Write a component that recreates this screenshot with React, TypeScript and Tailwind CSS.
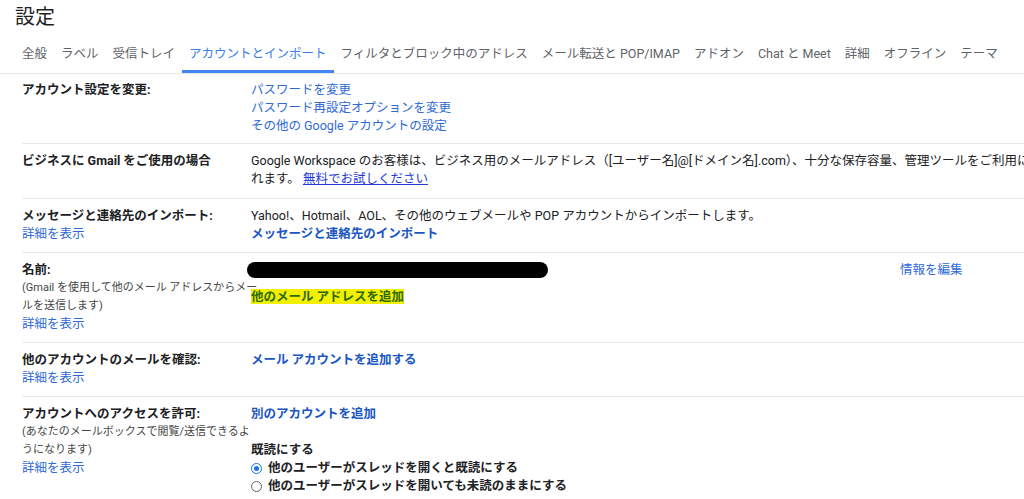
import type { ReactNode } from "react";

const tabs = [
  "全般",
  "ラベル",
  "受信トレイ",
  "アカウントとインポート",
  "フィルタとブロック中のアドレス",
  "メール転送と POP/IMAP",
  "アドオン",
  "Chat と Meet",
  "詳細",
  "オフライン",
  "テーマ",
];

const font = "font-['Roboto','Noto_Sans_CJK_JP',sans-serif]";

function Row({ label, children, pad }: { label: ReactNode; children: ReactNode; pad?: string }) {
  return (
    <div className={`flex border-b border-[#e9e9e9] leading-[18px] ${pad ?? "pt-2 pb-[9px]"}`}>
      <div className="w-[229px] shrink-0">{label}</div>
      {children}
    </div>
  );
}

function Label({ children }: { children: ReactNode }) {
  return <div className="font-bold text-[#202124]">{children}</div>;
}

function Note({ children, wide }: { children: ReactNode; wide?: boolean }) {
  return (
    <div className={wide ? "w-[236px] text-[11px] text-[#444746]" : "text-[11px] text-[#444746]"}>
      {children}
    </div>
  );
}

function More() {
  return <a className="block text-[#2f6ad6]">詳細を表示</a>;
}

function Radio({ checked, children }: { checked?: boolean; children: ReactNode }) {
  return (
    <label className="flex items-center gap-[6px] font-bold text-[#202124]">
      <span
        className={
          checked
            ? "flex h-[11px] w-[11px] items-center justify-center rounded-full border-[1.5px] border-[#1a73e8]"
            : "flex h-[11px] w-[11px] items-center justify-center rounded-full border border-[#5f6368]"
        }
      >
        {checked && <span className="h-[5px] w-[5px] rounded-full bg-[#1a73e8]" />}
      </span>
      {children}
    </label>
  );
}

export default function App() {
  return (
    <div className={`h-[499px] w-[1024px] overflow-hidden bg-white text-[12.5px] text-[#202124] ${font}`}>
      <div className="w-[1200px]">
        <h1 className="pl-[15px] pt-[3px] text-[20px] leading-[28px] font-normal text-[#1f1f1f]">設定</h1>

        <nav className="flex border-b border-[#e6e6e6] pl-[15px] pt-[14px]">
          {tabs.map((t) => (
            <div
              key={t}
              className={
                t === "アカウントとインポート"
                  ? "border-b-[3px] border-[#4285f4] px-[7px] pb-[7px] leading-[18px] whitespace-nowrap text-[#3b7ee8]"
                  : "border-b-[3px] border-transparent px-[7px] pb-[7px] leading-[18px] whitespace-nowrap text-[#5f6368]"
              }
            >
              {t}
            </div>
          ))}
        </nav>

        <div className="pl-[22px]">
          <Row pad="pt-[7px] pb-[8px]" label={<Label>アカウント設定を変更:</Label>}>
            <div className="flex flex-col text-[#2f6ad6]">
              <a>パスワードを変更</a>
              <a>パスワード再設定オプションを変更</a>
              <a>その他の Google アカウントの設定</a>
            </div>
          </Row>

          <Row pad="pt-2 pb-[10px]" label={<Label>ビジネスに Gmail をご使用の場合</Label>}>
            <div className="w-[800px]">
              Google Workspace のお客様は、ビジネス用のメールアドレス（[ユーザー名]@[ドメイン名].com）、十分な保存容量、管理ツールをご利用になれます。{" "}
              <a className="text-[#2439d6] underline">無料でお試しください</a>
            </div>
          </Row>

          <Row
            label={
              <>
                <Label>メッセージと連絡先のインポート:</Label>
                <More />
              </>
            }
          >
            <div>
              <div>Yahoo!、Hotmail、AOL、その他のウェブメールや POP アカウントからインポートします。</div>
              <a className="block font-bold text-[#1a56c4]">メッセージと連絡先のインポート</a>
            </div>
          </Row>

          <Row
            label={
              <>
                <Label>名前:</Label>
                <Note wide>(Gmail を使用して他のメール アドレスからメールを送信します)</Note>
                <More />
              </>
            }
          >
            <div className="w-[649px] shrink-0">
              <div className="-ml-1 flex h-[18px] items-center">
                <div className="h-[16px] w-[301px] rounded-full bg-black" />
              </div>
              <a className="mt-[10px] inline-block bg-[#f3ef00] font-bold leading-[15px] text-[#2d6a0c]">
                他のメール アドレスを追加
              </a>
            </div>
            <a className="text-[#2f6ad6]">情報を編集</a>
          </Row>

          <Row
            label={
              <>
                <Label>他のアカウントのメールを確認:</Label>
                <More />
              </>
            }
          >
            <a className="font-bold text-[#1a56c4]">メール アカウントを追加する</a>
          </Row>

          <Row
            label={
              <>
                <Label>アカウントへのアクセスを許可:</Label>
                <Note>(あなたのメールボックスで閲覧/送信できるようになります)</Note>
                <More />
              </>
            }
          >
            <div>
              <a className="block font-bold text-[#1a56c4]">別のアカウントを追加</a>
              <div className="mt-[18px] font-bold">既読にする</div>
              <Radio checked>他のユーザーがスレッドを開くと既読にする</Radio>
              <Radio>他のユーザーがスレッドを開いても未読のままにする</Radio>
            </div>
          </Row>
        </div>
      </div>
    </div>
  );
}
